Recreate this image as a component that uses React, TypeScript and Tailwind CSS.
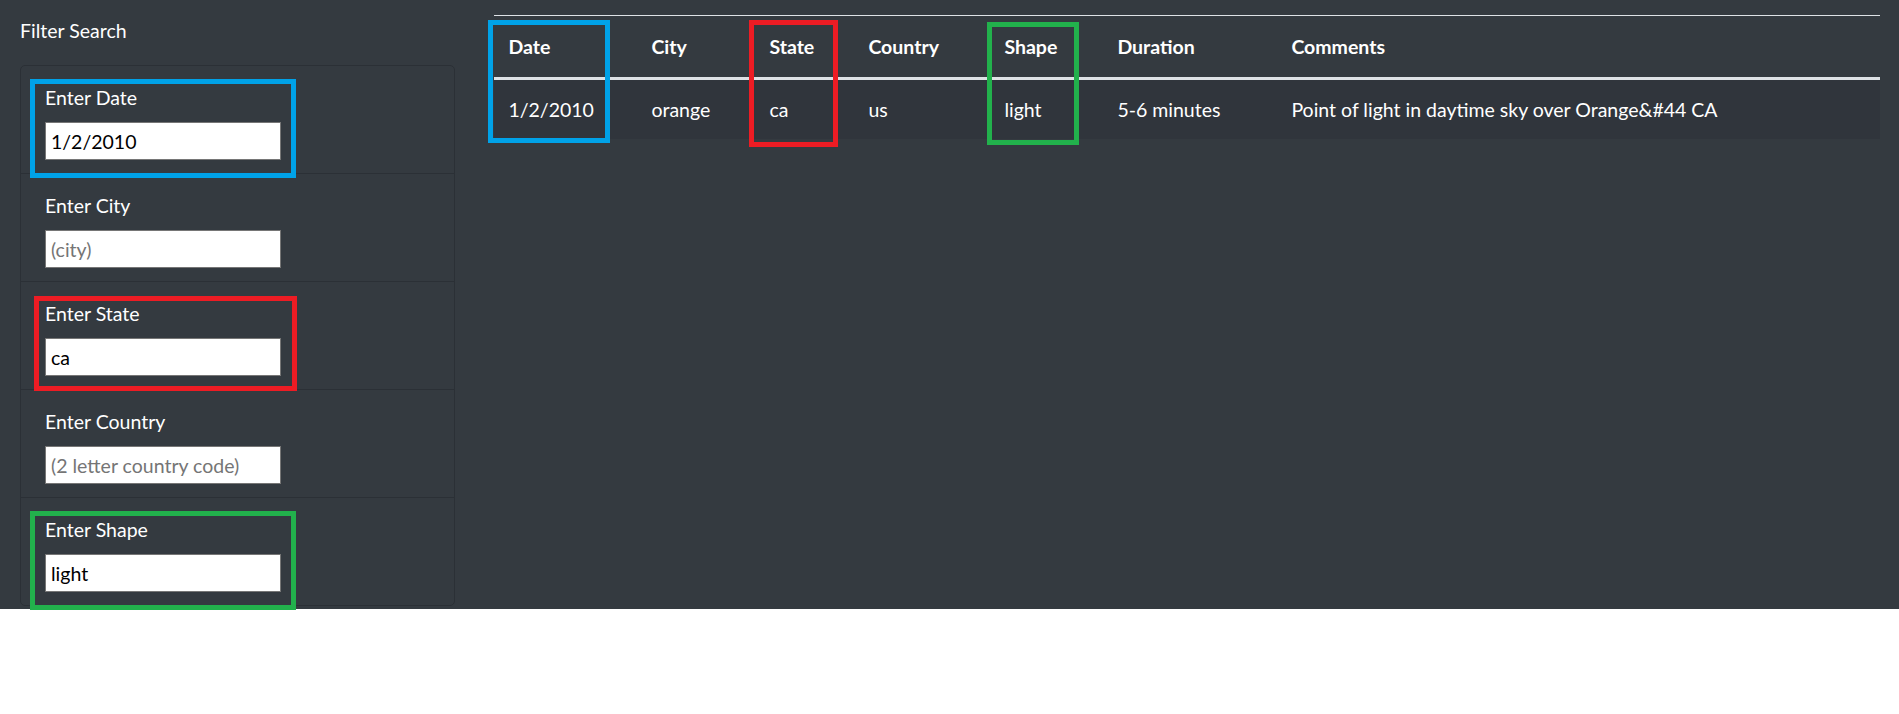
import React from 'react';

const FILTERS = [
  { label: 'Enter Date', value: '1/2/2010', placeholder: '(date)' },
  { label: 'Enter City', value: '', placeholder: '(city)' },
  { label: 'Enter State', value: 'ca', placeholder: '(state)' },
  { label: 'Enter Country', value: '', placeholder: '(2 letter country code)' },
  { label: 'Enter Shape', value: 'light', placeholder: '(shape)' },
];

const COLUMNS = [
  { key: 'date', title: 'Date', w: 'w-[143px]' },
  { key: 'city', title: 'City', w: 'w-[118px]' },
  { key: 'state', title: 'State', w: 'w-[99px]' },
  { key: 'country', title: 'Country', w: 'w-[136px]' },
  { key: 'shape', title: 'Shape', w: 'w-[113px]' },
  { key: 'duration', title: 'Duration', w: 'w-[174px]' },
  { key: 'comments', title: 'Comments', w: '' },
];

const ROWS: Record<string, string>[] = [
  {
    date: '1/2/2010',
    city: 'orange',
    state: 'ca',
    country: 'us',
    shape: 'light',
    duration: '5-6 minutes',
    comments: 'Point of light in daytime sky over Orange&#44 CA',
  },
];

export default function App() {
  return (
    <div className="relative min-h-[714px] bg-white font-['Lato','Segoe_UI',sans-serif] text-[19.5px] leading-[28.8px] text-white">
      <div className="flex h-[609px] bg-[#343a40]">
        {/* Filters column */}
        <div className="w-[475px] shrink-0 px-[20px] pt-[17px]">
          <div className="mb-[19px] h-[29px]">Filter Search</div>
          <ul className="rounded-[5px] border border-[#2b3036]">
            {FILTERS.map((f, i) => (
              <li
                key={f.label}
                className={`px-[24px] pt-[14px] pb-[13px] ${i > 0 ? 'border-t border-[#2b3036]' : ''}`}
              >
                <label className="block h-[29px] mb-[13px] pt-[4px]">{f.label}</label>
                <input
                  defaultValue={f.value}
                  placeholder={f.placeholder}
                  className="block h-[38px] w-[236px] border border-[#767676] bg-white px-[5px] text-[19.5px] text-black placeholder:text-[#757575] outline-none"
                />
              </li>
            ))}
          </ul>
        </div>

        {/* Results table */}
        <div className="flex-1 px-[19px] pt-[15px]">
          <table className="w-full border-collapse text-left">
            <thead>
              <tr>
                {COLUMNS.map(c => (
                  <th
                    key={c.key}
                    className={`${c.w} h-[63px] border-t border-b-[3px] border-t-[#dee2e6] border-b-[#dee2e6] px-[14.4px] pt-[2px] align-middle font-bold`}
                  >
                    {c.title}
                  </th>
                ))}
              </tr>
            </thead>
            <tbody>
              {ROWS.map((r, i) => (
                <tr key={i} className="bg-[#30353c]">
                  {COLUMNS.map(c => (
                    <td key={c.key} className="h-[60px] px-[14.4px] pt-[2px] align-middle font-normal">
                      {r[c.key]}
                    </td>
                  ))}
                </tr>
              ))}
            </tbody>
          </table>
        </div>
      </div>

      {/* Highlight annotations drawn over the screenshot */}
      <div className="pointer-events-none absolute left-[30px] top-[79px] h-[99px] w-[266px] border-[5px] border-[#00a2e8]" />
      <div className="pointer-events-none absolute left-[34px] top-[296px] h-[95px] w-[263px] border-[5px] border-[#ed1c24]" />
      <div className="pointer-events-none absolute left-[30px] top-[511px] h-[99px] w-[266px] border-[5px] border-[#22b14c]" />
      <div className="pointer-events-none absolute left-[488px] top-[20px] h-[123px] w-[122px] border-[5px] border-[#00a2e8]" />
      <div className="pointer-events-none absolute left-[749px] top-[20px] h-[127px] w-[89px] border-[5px] border-[#ed1c24]" />
      <div className="pointer-events-none absolute left-[987px] top-[22px] h-[123px] w-[92px] border-[5px] border-[#22b14c]" />
    </div>
  );
}
